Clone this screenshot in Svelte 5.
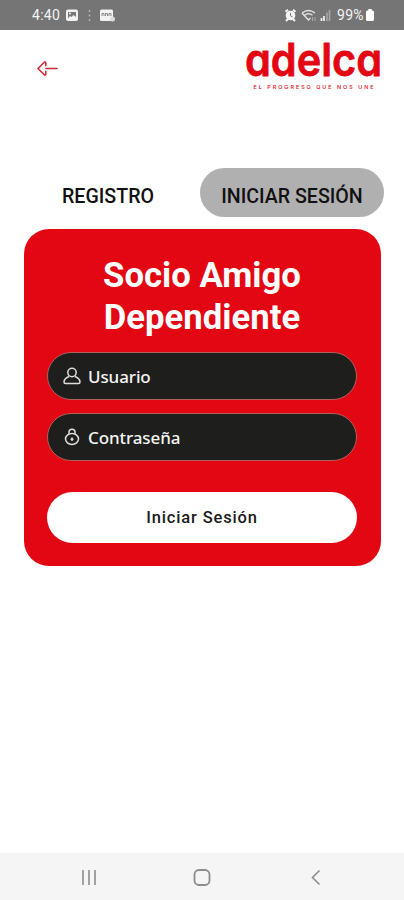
<script>
  let mode = "login";

  const fields = [
    { id: "user", label: "Usuario", icon: "user" },
    { id: "password", label: "Contraseña", icon: "lock" }
  ];
</script>

<style>
  :global(body) {
    background: #fff;
  }

  .screen {
    display: flex;
    flex-direction: column;
    height: 900px;
    width: 404px;
    overflow: hidden;
    font-family: Roboto, "Liberation Sans", sans-serif;
  }

  button {
    border: 0;
    padding: 0;
    background: none;
    font: inherit;
    color: inherit;
  }

  svg {
    display: block;
  }

  .status {
    display: flex;
    align-items: center;
    justify-content: space-between;
    box-sizing: border-box;
    height: 30px;
    padding: 0 30px 0 32px;
    background: #757575;
    color: #f4f4f4;
    font-size: 14px;
  }

  .status div {
    display: flex;
    align-items: center;
  }

  .time {
    width: 33px;
    letter-spacing: 0.3px;
  }

  .percent {
    width: 29px;
    margin-left: 3px;
    letter-spacing: 0.3px;
  }

  header {
    display: flex;
    justify-content: space-between;
    height: 138px;
    padding: 0 20px 0 36px;
  }

  .back {
    align-self: flex-start;
    margin-top: 30px;
  }

  .logo {
    margin-top: 6px;
    overflow: visible;
  }

  .word {
    font-family: Inter, sans-serif;
    font-size: 45px;
    font-weight: 600;
    font-feature-settings: "cv11";
  }

  .slogan {
    font-family: Inter, sans-serif;
    font-size: 5.4px;
    font-weight: 500;
  }

  .tabs {
    display: flex;
    height: 49px;
    margin-left: 16px;
  }

  .tabs button {
    width: 184px;
    padding-top: 7px;
    border-radius: 25px;
    color: #111;
    font-size: 19.6px;
    font-weight: 500;
  }

  .tabs button.active {
    background: #b1b0b1;
  }

  .card {
    box-sizing: border-box;
    width: 357px;
    height: 337px;
    margin: 12px 0 0 24px;
    padding: 25px 24px 0 23px;
    border-radius: 25px;
    background: #e30613;
  }

  h1 {
    margin: 0 0 14px;
    color: #fff;
    font-size: 34.7px;
    font-weight: 700;
    line-height: 42px;
    text-align: center;
  }

  .field {
    display: flex;
    align-items: center;
    box-sizing: border-box;
    height: 48px;
    margin-bottom: 13px;
    padding-left: 15px;
    border: 1px solid #b0605c;
    border-radius: 24px;
    background: #1e1f1c;
    color: #f4f4f4;
    font-family: "Noto Sans", sans-serif;
    font-size: 17px;
    font-weight: 500;
    letter-spacing: -0.1px;
  }

  .field span {
    margin-left: 7px;
  }

  .submit {
    width: 310px;
    height: 51px;
    margin-top: 18px;
    border-radius: 26px;
    background: #fff;
    color: #1b1b1b;
    font-size: 16.5px;
    font-weight: 500;
    letter-spacing: 0.85px;
  }

  nav {
    display: flex;
    align-items: center;
    justify-content: space-between;
    box-sizing: border-box;
    height: 47px;
    margin-top: auto;
    padding: 0 78px;
    background: #f5f5f5;
  }
</style>

<div class="screen">
  <div class="status">
    <div>
      <span class="time">4:40</span>
      <svg width="52" height="14" viewBox="0 0 52 14">
        <rect x="1" y="1.5" width="12" height="11.5" rx="2" fill="#f2f2f2" />
        <path d="M3 10.5V4h8v5L8.5 7 6.5 9 5 8z" fill="#777" />
        <circle cx="5" cy="5.5" r="1" fill="#f2f2f2" />
        <g fill="#b8b8b8">
          <circle cx="24.5" cy="3" r="0.9" />
          <circle cx="24.5" cy="7.5" r="0.9" />
          <circle cx="24.5" cy="12" r="0.9" />
        </g>
        <rect x="35" y="1.5" width="13" height="11.5" rx="1.5" fill="#f2f2f2" />
        <path d="M37 8V5.5h2V8m1.5 0V5.5h2V8m1.5 0V5.5h2V8" fill="none" stroke="#888" />
        <circle cx="47.5" cy="11" r="2.5" fill="#ddd" />
      </svg>
    </div>
    <div>
      <svg width="50" height="14" viewBox="0 0 50 14">
        <circle cx="6.5" cy="7.5" r="4.8" fill="#f4f4f4" />
        <path d="M1.5 3.8 4 1.7M11.5 3.8 9 1.7M2 13l2-2M11 13l-2-2" stroke="#f4f4f4" stroke-width="2" />
        <path d="M6.5 4.8v3l2 1" fill="none" stroke="#777" />
        <g fill="none" stroke="#e4e4e4" stroke-width="1.4">
          <path d="M18 5q6.500-5 13 0M20.500 7.200q4-3 8 0" />
          <path d="m18 5 6.500 7 2-2" />
        </g>
        <path d="M28.500 9v4m2.500-4v4" stroke="#aaa" />
        <path d="M37.500 13v-3M40 13V8" stroke="#eee" stroke-width="1.800" />
        <path d="M43 13V4.500M45.500 13V2" stroke="#a8a8a8" stroke-width="1.600" />
      </svg>
      <span class="percent">99%</span>
      <svg width="8" height="14" viewBox="0 0 8 14">
        <path d="M2.300 1h3.400v1.500h.8q1.500 0 1.500 1.500v7.500q0 1.500-1.500 1.500h-5Q0 13 0 11.500V4q0-1.500 1.500-1.500h.8z" fill="#fff" />
      </svg>
    </div>
  </div>

  <header>
    <button class="back" aria-label="Volver">
      <svg width="23" height="17" viewBox="0 0 23 17" fill="none" stroke="#cf2630" stroke-width="1.500" stroke-linecap="round" stroke-linejoin="round">
        <path d="M9.800 5.700V2.700Q9.500 1.400 8.300 2.200L2 8.500l6.300 6.300q1.200.8 1.500-.500V11.300M10 8.500h11" />
      </svg>
    </button>
    <svg class="logo" width="140" height="56" viewBox="0 0 140 56" fill="#e30613">
      <text class="word" x="1" y="39.700" textLength="137" lengthAdjust="spacingAndGlyphs" stroke="#e30613" stroke-width="0.800" stroke-linejoin="round">adelca</text>
      <text class="slogan" x="9.500" y="53" textLength="120">EL PROGRESO QUE NOS UNE</text>
    </svg>
  </header>

  <div class="tabs">
    <button class:active={mode === "register"} on:click={() => (mode = "register")}>REGISTRO</button>
    <button class:active={mode === "login"} on:click={() => (mode = "login")}>INICIAR SESIÓN</button>
  </div>

  <main class="card">
    <h1>Socio Amigo<br />Dependiente</h1>
    {#each fields as field (field.id)}
      <div class="field">
        <svg width="18" height="20" viewBox="0 0 18 20" fill="none" stroke="#ddd" stroke-width="1.500" stroke-linejoin="round">
          {#if field.icon === "user"}
            <circle cx="9" cy="6.500" r="4.200" />
            <path d="M6 10.500Q1 12.500 1 16q0 1.500 1.500 1.500h13Q17 17.500 17 16q0-3.500-5-5.500" />
          {:else}
            <ellipse cx="9" cy="12" rx="6.500" ry="5.500" />
            <path d="M6 7.500V5q0-2.800 3-2.800T12 5v2.500" />
            <path d="M9 10.500v3.500M7.500 12.300h3" />
          {/if}
        </svg>
        <span>{field.label}</span>
      </div>
    {/each}
    <button class="submit">Iniciar Sesión</button>
  </main>

  <nav>
    <svg width="22" height="20" viewBox="0 0 22 20" stroke="#999" stroke-width="1.800">
      <path d="M5 3v15M11 3v15M17 3v15" />
    </svg>
    <svg width="20" height="20" viewBox="0 0 20 20" fill="none" stroke="#8d8d8d" stroke-width="1.800">
      <rect x="1.500" y="3" width="15" height="15" rx="4.500" />
    </svg>
    <svg width="20" height="20" viewBox="0 0 20 20" fill="none" stroke="#8d8d8d" stroke-width="1.600">
      <path d="m13.500 3.500-7 7 7 7" />
    </svg>
  </nav>
</div>
